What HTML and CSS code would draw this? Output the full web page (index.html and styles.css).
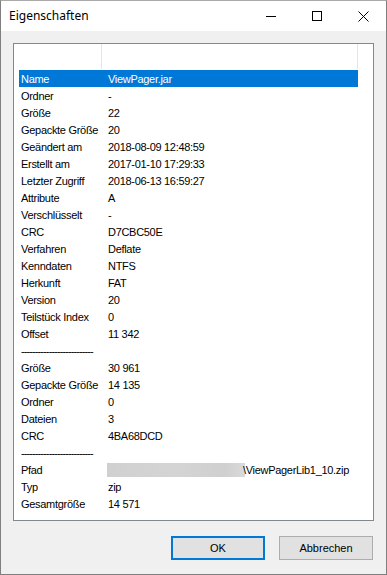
FILE: index.html
```html
<!DOCTYPE html>
<html lang="de">
<head>
  <meta charset="UTF-8" />
  <title>Eigenschaften</title>
  <link rel="stylesheet" href="styles.css">
</head>
<body>
  <div class="window">
    <div class="titlebar">
      <div class="title">Eigenschaften</div>
      <div class="controls">
        <div class="ctl">
          <svg width="10" height="10" viewBox="0 0 10 10"><path d="M0 5.5H10" stroke="#000" stroke-width="1"/></svg>
        </div>
        <div class="ctl">
          <svg width="10" height="10" viewBox="0 0 10 10"><rect x="0.5" y="0.5" width="9" height="9" fill="none" stroke="#000" stroke-width="1"/></svg>
        </div>
        <div class="ctl">
          <svg width="11" height="11" viewBox="0 0 11 11"><path d="M0.5 0.5L10.5 10.5M10.5 0.5L0.5 10.5" stroke="#000" stroke-width="1"/></svg>
        </div>
      </div>
    </div>

    <div class="content">
      <div class="listbox">
        <div class="lv-header">
          <div class="hcol first"></div>
          <div class="hcol second"></div>
        </div>
        <div class="rows">
          <div class="row selected"><span>Name</span><span>ViewPager.jar</span></div>
          <div class="row"><span>Ordner</span><span>-</span></div>
          <div class="row"><span>Größe</span><span>22</span></div>
          <div class="row"><span>Gepackte Größe</span><span>20</span></div>
          <div class="row"><span>Geändert am</span><span>2018-08-09 12:48:59</span></div>
          <div class="row"><span>Erstellt am</span><span>2017-01-10 17:29:33</span></div>
          <div class="row"><span>Letzter Zugriff</span><span>2018-06-13 16:59:27</span></div>
          <div class="row"><span>Attribute</span><span>A</span></div>
          <div class="row"><span>Verschlüsselt</span><span>-</span></div>
          <div class="row"><span>CRC</span><span>D7CBC50E</span></div>
          <div class="row"><span>Verfahren</span><span>Deflate</span></div>
          <div class="row"><span>Kenndaten</span><span>NTFS</span></div>
          <div class="row"><span>Herkunft</span><span>FAT</span></div>
          <div class="row"><span>Version</span><span>20</span></div>
          <div class="row"><span>Teilstück Index</span><span>0</span></div>
          <div class="row"><span>Offset</span><span>11 342</span></div>
          <div class="row"><span class="dashes">--------------------------</span><span></span></div>
          <div class="row"><span>Größe</span><span>30 961</span></div>
          <div class="row"><span>Gepackte Größe</span><span>14 135</span></div>
          <div class="row"><span>Ordner</span><span>0</span></div>
          <div class="row"><span>Dateien</span><span>3</span></div>
          <div class="row"><span>CRC</span><span>4BA68DCD</span></div>
          <div class="row"><span class="dashes">--------------------------</span><span></span></div>
          <div class="row"><span>Pfad</span><span><i class="blur"></i><b class="path">\ViewPagerLib1_10.zip</b></span></div>
          <div class="row"><span>Typ</span><span>zip</span></div>
          <div class="row"><span>Gesamtgröße</span><span>14 571</span></div>
        </div>
      </div>

      <div class="buttons">
        <button class="btn default">OK</button>
        <button class="btn">Abbrechen</button>
      </div>
    </div>
  </div>
</body>
</html>
```

FILE: styles.css
```css
body {
  margin: 0;
  padding: 0;
  background: #f0f0f0;
  font-family: "Liberation Sans", Arial, sans-serif;
}

.window {
  width: 387px;
  height: 575px;
  box-sizing: border-box;
  border: 1px solid #7f7f7f;
  border-top-color: #a9a9a9;
  background: #f0f0f0;
  display: flex;
  flex-direction: column;
}

.titlebar {
  height: 30px;
  background: #fff;
  display: flex;
  align-items: stretch;
  flex-shrink: 0;
}

.title {
  flex: 1;
  padding-left: 8px;
  font-family: "Noto Sans", "Open Sans", sans-serif;
  font-size: 12px;
  line-height: 30px;
  color: #000;
}

.controls {
  display: flex;
}

.ctl {
  width: 46px;
  display: flex;
  align-items: center;
  justify-content: center;
}

.ctl svg {
  display: block;
}

.content {
  flex: 1;
  padding: 12px 12px 0;
  display: flex;
  flex-direction: column;
}

.listbox {
  height: 478px;
  box-sizing: border-box;
  border: 1px solid #828790;
  background: #fff;
}

.lv-header {
  display: flex;
  height: 25px;
}

.hcol {
  border-right: 1px solid #e5e5e5;
}

.hcol.first {
  width: 87px;
}

.hcol.second {
  width: 255px;
}

.rows {
  margin-top: 1px;
  margin-left: 5px;
  width: 339px;
  font-size: 11px;
  letter-spacing: -0.3px;
  color: #000;
}

.row {
  display: grid;
  grid-template-columns: 87px 1fr;
  height: 17px;
  line-height: 18px;
  white-space: nowrap;
}

.row span {
  padding-left: 2px;
  overflow: visible;
}

.row.selected {
  background: #0078d7;
  color: #fff;
}

.dashes {
  letter-spacing: -0.9px;
}

.blur {
  display: inline-block;
  width: 138px;
  height: 14px;
  margin-left: -1px;
  vertical-align: -3px;
  background: linear-gradient(90deg, #d0d0d0, #d4d4d4 50%, #cfcfcf 85%, #dadada);
}

.path {
  font-weight: normal;
  margin-left: -2px;
}

.buttons {
  display: flex;
  justify-content: flex-end;
  gap: 14px;
  margin-top: 15px;
  padding-right: 1px;
}

.btn {
  width: 94px;
  height: 24px;
  box-sizing: border-box;
  background: #e1e1e1;
  border: 1px solid #adadad;
  font-family: "Liberation Sans", Arial, sans-serif;
  font-size: 11px;
  color: #000;
  padding: 0;
}

.btn.default {
  border: 2px solid #0078d7;
}
```
